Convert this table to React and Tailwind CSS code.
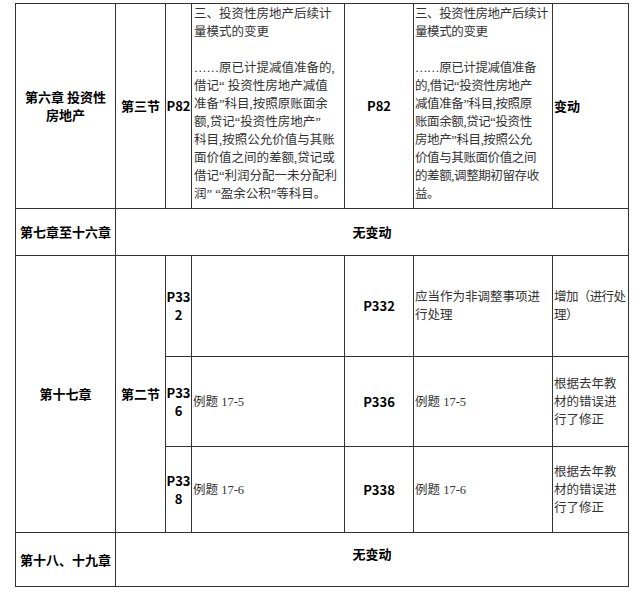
import React from "react";

const bodyFont = "font-['Liberation_Serif','Noto_Sans_CJK_SC',serif] font-normal text-[#333] text-[12.5px]";
const headFont = "font-['Noto_Sans_CJK_SC',sans-serif] font-bold text-black text-[13px]";

const Cell = ({ children, className = "", ...rest }) => (
  <td className={`border border-[#333] p-0 leading-[18px] ${className}`} {...rest}>
    {children}
  </td>
);

const Lines = ({ lines }) => (
  <div>
    {lines.map((l, i) => (
      <div key={i} className="whitespace-nowrap h-[18px]">
        {l || "\u00a0"}
      </div>
    ))}
  </div>
);

const oldText = [
  "三、投资性房地产后续计",
  "量模式的变更",
  "",
  "……原已计提减值准备的,",
  "借记“ 投资性房地产减值",
  "准备”科目,按照原账面余",
  "额,贷记“投资性房地产”",
  "科目,按照公允价值与其账",
  "面价值之间的差额,贷记或",
  "借记“利润分配一未分配利",
  "润” “盈余公积”等科目。",
];

const newText = [
  "三、投资性房地产后续计",
  "量模式的变更",
  "",
  "……原已计提减值准备",
  "的,借记“投资性房地产",
  "减值准备”科目,按照原",
  "账面余额,贷记“投资性",
  "房地产”科目,按照公允",
  "价值与其账面价值之间",
  "的差额,调整期初留存收",
  "益。",
];

const fixNote = ["根据去年教", "材的错误进", "行了修正"];

export default function App() {
  return (
    <div className="bg-white w-[640px] h-[593px] pt-[3px] pl-[15px]">
      <table className="table-fixed border-collapse w-[613px]">
        <colgroup>
          <col className="w-[100px]" />
          <col className="w-[50px]" />
          <col className="w-[26px]" />
          <col className="w-[153px]" />
          <col className="w-[69px]" />
          <col className="w-[139px]" />
          <col className="w-[76px]" />
        </colgroup>
        <tbody>
          <tr className="h-[205px]">
            <Cell className={`${headFont} text-center px-1`}>
              第六章 投资性<br />房地产
            </Cell>
            <Cell className={`${headFont} text-center`}>第三节</Cell>
            <Cell className={`${headFont} text-center`}>P82</Cell>
            <Cell className={`${bodyFont} align-top pl-[2px] pt-[1px]`}>
              <Lines lines={oldText} />
            </Cell>
            <Cell className={`${headFont} text-center`}>P82</Cell>
            <Cell className={`${bodyFont} align-top pl-[1px] pt-[1px] tracking-[-0.4px]`}>
              <Lines lines={newText} />
            </Cell>
            <Cell className={`${headFont} pl-[1px]`}>变动</Cell>
          </tr>
          <tr className="h-[47px]">
            <Cell className={`${headFont} text-center`}>第七章至十六章</Cell>
            <Cell colSpan={6} className={`${headFont} text-center`}>无变动</Cell>
          </tr>
          <tr className="h-[101px]">
            <Cell rowSpan={3} className={`${headFont} text-center`}>第十七章</Cell>
            <Cell rowSpan={3} className={`${headFont} text-center`}>第二节</Cell>
            <Cell className={`${headFont} text-center`}>P33<br />2</Cell>
            <Cell className={bodyFont}></Cell>
            <Cell className={`${headFont} text-center`}>P332</Cell>
            <Cell className={`${bodyFont} pl-[1px]`}>
              <Lines lines={["应当作为非调整事项进", "行处理"]} />
            </Cell>
            <Cell className={`${bodyFont} pl-[1px] tracking-[-0.6px]`}>
              <Lines lines={["增加（进行处", "理）"]} />
            </Cell>
          </tr>
          <tr className="h-[90px]">
            <Cell className={`${headFont} text-center`}>P33<br />6</Cell>
            <Cell className={`${bodyFont} pl-[1px]`}>例题 17-5</Cell>
            <Cell className={`${headFont} text-center`}>P336</Cell>
            <Cell className={`${bodyFont} pl-[1px]`}>例题 17-5</Cell>
            <Cell className={`${bodyFont} pl-[1px]`}>
              <Lines lines={fixNote} />
            </Cell>
          </tr>
          <tr className="h-[86px]">
            <Cell className={`${headFont} text-center`}>P33<br />8</Cell>
            <Cell className={`${bodyFont} pl-[1px]`}>例题 17-6</Cell>
            <Cell className={`${headFont} text-center`}>P338</Cell>
            <Cell className={`${bodyFont} pl-[1px]`}>例题 17-6</Cell>
            <Cell className={`${bodyFont} pl-[1px]`}>
              <Lines lines={fixNote} />
            </Cell>
          </tr>
          <tr className="h-[54px]">
            <Cell className={`${headFont} text-center`}>第十八、十九章</Cell>
            <Cell colSpan={6} className={`${headFont} text-center pb-[12px]`}>无变动</Cell>
          </tr>
        </tbody>
      </table>
    </div>
  );
}
